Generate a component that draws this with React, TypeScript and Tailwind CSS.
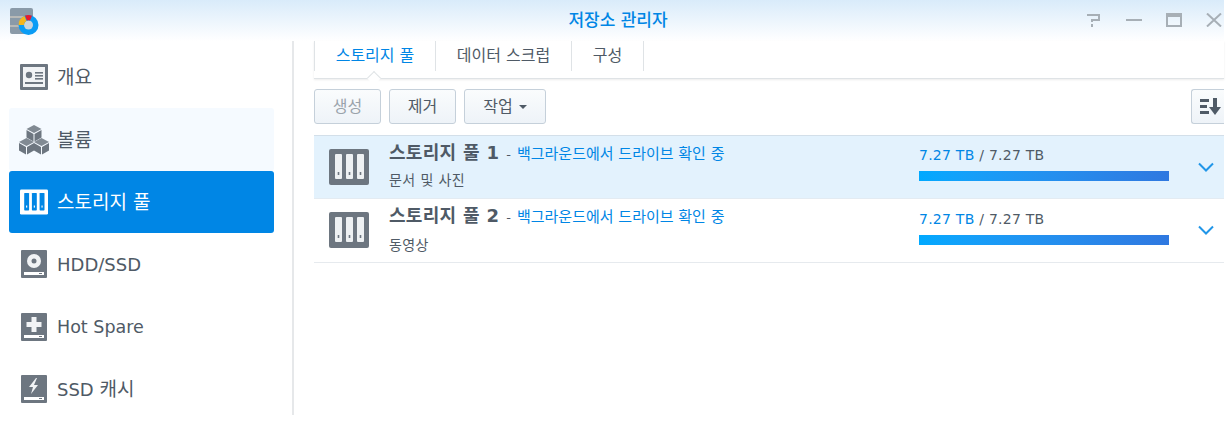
import React from "react";

const font = { fontFamily: '"DejaVu Sans","Noto Sans CJK KR",sans-serif' };

function PoolIcon({ className, bg, fg }: { className?: string; bg: string; fg: string }) {
  return (
    <svg viewBox="0 0 40 36" className={className}>
      <rect width="40" height="36" rx="2" fill={bg} />
      {[6, 17, 28].map((x) => (
        <g key={x}>
          <rect x={x} y="5" width="7" height="25" rx="1" fill={fg} />
          <rect x={x + 2.7} y="23" width="1.6" height="3" fill={bg} />
        </g>
      ))}
    </svg>
  );
}

function Drive({ children }: { children: React.ReactNode }) {
  return (
    <svg viewBox="0 0 26 28" className="w-[26px] h-[28px]">
      <rect width="26" height="28" rx="1" fill="#6d7680" />
      <rect x="3" y="22" width="20" height="3" fill="#fff" />
      <rect x="18" y="23" width="3" height="1" fill="#6d7680" />
      {children}
    </svg>
  );
}

const overview = (
  <svg viewBox="0 0 28 26" className="w-[28px] h-[26px]">
    <rect width="28" height="26" rx="1" fill="#6d7680" />
    <rect x="3" y="3" width="22" height="20" fill="#f1f3f5" />
    <circle cx="9" cy="11" r="3.2" fill="#6d7680" />
    <rect x="15" y="8" width="8" height="1.6" fill="#6d7680" />
    <rect x="15" y="11" width="8" height="1.6" fill="#6d7680" />
    <rect x="15" y="14" width="8" height="1.6" fill="#6d7680" />
    <rect x="5" y="18" width="18" height="2" fill="#6d7680" />
  </svg>
);

const cube = (x: number, y: number) => (
  <g transform={`translate(${x} ${y})`}>
    <path d="M7.5 0L15 4L7.5 8L0 4Z" fill="#818a93" />
    <path d="M0 5L7 9V16.5L0 12.5Z" fill="#6d7680" />
    <path d="M15 5L8 9V16.5L15 12.5Z" fill="#6d7680" />
  </g>
);

const volume = (
  <svg viewBox="0 0 30 30" className="w-[30px] h-[30px]">
    {cube(7.5, 0)}
    {cube(0, 13)}
    {cube(15, 13)}
  </svg>
);

const items: { label: React.ReactNode; key: string; icon: React.ReactNode; state?: string }[] = [
  { key: "a", label: <span className="text-[19px]">개요</span>, icon: overview },
  { key: "b", label: <span className="text-[19px]">볼륨</span>, icon: volume, state: "hover" },
  {
    key: "c",
    label: <span className="text-[19px]">스토리지 풀</span>,
    icon: <PoolIcon className="w-[28px] h-[26px]" bg="#fff" fg="#0086e5" />,
    state: "active",
  },
  {
    key: "d",
    label: <span className="text-[18px]">HDD/SSD</span>,
    icon: (
      <Drive>
        <circle cx="13" cy="11" r="7" fill="#f1f3f5" />
        <circle cx="13" cy="11" r="2.5" fill="#6d7680" />
      </Drive>
    ),
  },
  {
    key: "e",
    label: <span className="text-[17.500px]">Hot Spare</span>,
    icon: (
      <Drive>
        <path d="M10.5 4h5v5h5v5h-5v5h-5v-5h-5V9h5z" fill="#f1f3f5" />
      </Drive>
    ),
  },
  {
    key: "f",
    label: (
      <span className="text-[18px]">
        SSD <span className="text-[19px]">캐시</span>
      </span>
    ),
    icon: (
      <Drive>
        <path d="M15 3L8 12h4l-2 7 7-9h-4l3-7z" fill="#f1f3f5" />
      </Drive>
    ),
  },
];

function Row({ n, sub, selected }: { n: number; sub: string; selected?: boolean }) {
  return (
    <div
      className={`flex items-center border-b h-[64px] ${
        selected ? "bg-[#e3f2fd] border-[#e3ebf2] border-t border-t-[#d3dfe9]" : "border-[#e6eaee] bg-white pb-[1px]"
      }`}
    >
      <div className="w-[75px] pl-[15px] shrink-0">
        <PoolIcon className="w-[40px] h-[36px]" bg="#6d7680" fg="#eef1f3" />
      </div>
      <div className={`w-[530px] shrink-0 ${selected ? "pb-[2px]" : ""}`}>
        <div className="flex items-baseline leading-[20px] whitespace-nowrap">
          <span className="text-[18px] font-bold text-[#4f5a66] tracking-[0.3px]">스토리지 풀 {n}</span>
          <span className="text-[13px] text-[#4f5a66] ml-[7px]">-</span>
          <span className="text-[15px] text-[#0086e5] ml-[6px]">백그라운드에서 드라이브 확인 중</span>
        </div>
        <div className={`text-[14px] text-[#4f5a66] leading-[18px] tracking-[0.4px] ${selected ? "mt-[6px]" : "mt-[8px]"}`}>{sub}</div>
      </div>
      <div className={`w-[250px] shrink-0 ${selected ? "pb-[8px]" : "pb-[6px]"}`}>
        <div className="text-[14px] leading-[18px] whitespace-nowrap tracking-[0.25px]">
          <span className="text-[#0086e5]">7.27 TB</span>
          <span className="text-[#4f5a66]"> / 7.27 TB</span>
        </div>
        <div className="mt-[7px] h-[10px] bg-gradient-to-r from-[#00a9ff] to-[#2f78e0]" />
      </div>
      <svg viewBox="0 0 16 10" className="w-[16px] h-[10px] ml-[29px]" fill="none" stroke="#2196e8" strokeWidth="2">
        <path d="M1 1.5l7 7 7-7" />
      </svg>
    </div>
  );
}

function Btn({ children, muted, className }: { children: React.ReactNode; muted?: boolean; className?: string }) {
  return (
    <div
      className={`h-[35px] flex items-center justify-center rounded-[3px] border border-[#c5d0da] bg-gradient-to-b from-[#fafcfd] to-[#eef3f8] text-[16px] ${
        muted ? "text-[#9aa3ab]" : "text-[#4f5a66]"
      } ${className ?? ""}`}
    >
      {children}
    </div>
  );
}

export default function App() {
  return (
    <div className="w-[1230px] h-[426px] bg-white overflow-hidden" style={font}>
      <div className="w-[1224px] h-[415px] flex flex-col">
        <header className="h-[41px] shrink-0 flex items-center bg-gradient-to-b from-[#d9ebfa] to-[#ffffff] relative">
          <svg viewBox="0 0 30 28" className="w-[30px] h-[28px] ml-[10px]">
            <rect x="0" y="1" width="23" height="26" rx="2" fill="#8a9aa8" />
            <path d="M0 10h23M0 19h23" stroke="#e6d8c6" strokeWidth="1" />
            <circle cx="18.500" cy="18" r="10" fill="#0a9cf5" />
            <circle cx="18.500" cy="18" r="4.500" fill="#c8d4de" />
            <path d="M8.500 18a10 10 0 0 1 6-9l2 5a4.500 4.500 0 0 0-2.500 4z" fill="#f5b51d" />
            <path d="M15 8.500a10 10 0 0 1 7 .2l-2 4.800a4.500 4.500 0 0 0-3 0z" fill="#e8192c" />
          </svg>
          <div className="absolute inset-x-0 text-center text-[17px] font-medium text-[#0086e5] leading-[41px] pl-[12px]">저장소 관리자</div>
          <div className="ml-auto flex items-center gap-[24px] pr-[2px] mb-[1px]">
            <svg viewBox="0 0 16 14" className="w-[16px] h-[14px]" fill="none" stroke="#a7afb6" strokeWidth="2">
              <path d="M1 2h12v5H6v2M6 11v3" />
            </svg>
            <div className="w-[16px] h-[2px] bg-[#a7afb6]" />
            <div className="w-[16px] h-[14px] border-2 border-t-[4px] border-[#a7afb6]" />
            <svg viewBox="0 0 16 14" className="w-[16px] h-[14px]" fill="none" stroke="#a7afb6" strokeWidth="2">
              <path d="M1 0.5l14 13M15 0.5L1 13.500" />
            </svg>
          </div>
        </header>
        <div className="flex flex-1 min-h-0">
          <aside className="w-[294px] shrink-0 border-r-2 border-[#e6e8ea] pl-[9px] pr-[18px] pt-[5px] overflow-hidden">
            {items.map((it) => (
              <div
                key={it.key}
                className={`h-[62.4px] flex items-center rounded-[3px] ${
                  it.state === "active"
                    ? "bg-[#0086e5] text-white"
                    : it.state === "hover"
                      ? "bg-[#f5faff] text-[#4f5a66]"
                      : "text-[#4f5a66]"
                }`}
              >
                <div className="w-[48px] flex justify-center pl-[3px] shrink-0 pr-[1px]">{it.icon}</div>
                <div className="whitespace-nowrap pt-[1px]">{it.label}</div>
              </div>
            ))}
          </aside>
          <main className="flex-1 min-w-0 pl-[20px]">
            <div className="h-[38px] border-b border-[#dfe3e6] shadow-[0_1px_2px_rgba(0,0,0,0.08)] relative">
              <div className="flex h-[30px] border-l border-[#dfe3e6] w-max text-[16px] text-[#4f5a66]">
                <div className="w-[121px] border-r border-[#dfe3e6] flex items-center justify-center text-[#0086e5]">스토리지 풀</div>
                <div className="w-[136px] border-r border-[#dfe3e6] flex items-center justify-center">데이터 스크럽</div>
                <div className="w-[72px] border-r border-[#dfe3e6] flex items-center justify-center">구성</div>
              </div>
              <div className="absolute left-[55px] top-[32px] w-[10px] h-[10px] rotate-45 bg-white border-l border-t border-[#dfe3e6]" />
            </div>
            <div className="flex items-center mt-[10px] gap-[8px]">
              <Btn muted className="w-[67px]">생성</Btn>
              <Btn className="w-[67px]">제거</Btn>
              <Btn className="w-[82px] gap-[6px]">
                작업
                <span className="w-0 h-0 border-x-[4px] border-x-transparent border-t-[4px] border-t-[#4f5a66] mt-[1px]" />
              </Btn>
              <Btn className="w-[33px] ml-auto rounded-r-none border-r-0 pl-[5px]">
                <svg viewBox="0 0 21 17" className="w-[21px] h-[17px] shrink-0" fill="#4f5a66">
                  <rect x="0" y="1" width="9" height="3" />
                  <rect x="0" y="7" width="7" height="3" />
                  <rect x="0" y="13" width="9" height="3" />
                  <path d="M13 0h4v9h4l-6 8-6-8h4z" />
                </svg>
              </Btn>
            </div>
            <div className="mt-[11px]">
              <Row n={1} sub="문서 및 사진" selected />
              <Row n={2} sub="동영상" />
            </div>
          </main>
        </div>
      </div>
    </div>
  );
}
